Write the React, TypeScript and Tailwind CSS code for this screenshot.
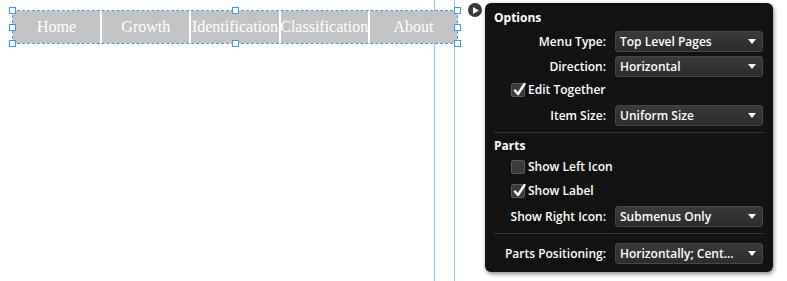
import React from "react";

const items = ["Home", "Growth", "Identification", "Classification", "About"];

function Handle({ className }: { className: string }) {
  return <div className={`absolute w-[7px] h-[7px] bg-white border border-[#3d97f5] ${className}`} />;
}

function Select({ value }: { value: string }) {
  return (
    <div className="h-[21px] w-[148px] flex items-center justify-between pl-[4px] pr-[6px] rounded-[3px] border border-[#474747] bg-gradient-to-b from-[#3a3a3a] to-[#2c2c2c] text-white text-[12px] font-semibold">
      <span>{value}</span>
      <svg width="8" height="5" viewBox="0 0 8 5">
        <path d="M0 0 H8 L4 5 Z" fill="#fff" />
      </svg>
    </div>
  );
}

function Row({ label, value }: { label: string; value: string }) {
  return (
    <div className="flex items-center gap-[8px]">
      <div className="w-[113px] text-right pr-[1px] text-[12px] font-semibold text-white">{label}</div>
      <Select value={value} />
    </div>
  );
}

function Check({ label, checked }: { label: string; checked: boolean }) {
  return (
    <div className="flex items-center gap-[3px] h-[14px] pl-[17px]">
      <div className="relative w-[14px] h-[14px] rounded-[2px] border border-[#5a5a5a] bg-[#3a3a3a]">
        {checked && (
          <svg className="absolute left-[1px] top-[-2px]" width="13" height="15" viewBox="0 0 13 15">
            <path d="M2 8.5 L5 12 L11.5 2" stroke="#fff" strokeWidth="2.4" fill="none" strokeLinecap="round" strokeLinejoin="round" />
          </svg>
        )}
      </div>
      <span className="text-[12px] font-semibold text-white">{label}</span>
    </div>
  );
}

export default function App() {
  return (
    <div className="relative flex w-[787px] h-[281px] bg-white overflow-hidden font-['Open_Sans',sans-serif]">
      {/* guides */}
      <div className="absolute left-[434px] top-0 h-full w-px bg-[#8ec3f7]" />
      <div className="absolute left-[454px] top-0 h-full w-px bg-[#8ec3f7]" />

      {/* page canvas with menu bar */}
      <div className="w-[468px] pl-[12px] pt-[10px]">
        <div className="relative w-[446px] h-[34px] border border-dashed border-[#3d97f5]">
          <div className="grid grid-cols-5 gap-[2px] h-full bg-white">
            {items.map((t) => (
              <div
                key={t}
                className="bg-[#c3c3c3] flex items-center justify-center text-white text-[16px] font-['Liberation_Serif',serif]"
              >
                {t}
              </div>
            ))}
          </div>
          <Handle className="left-[-4px] top-[-4px]" />
          <Handle className="left-[-4px] top-[13px]" />
          <Handle className="left-[-4px] bottom-[-4px]" />
          <Handle className="left-[219px] top-[-4px]" />
          <Handle className="left-[219px] bottom-[-4px]" />
          <Handle className="right-[-4px] top-[-4px]" />
          <Handle className="right-[-4px] top-[13px]" />
          <Handle className="right-[-4px] bottom-[-4px]" />
        </div>
      </div>

      {/* collapse button + properties panel */}
      <div className="relative z-10 flex items-start gap-[3px] pt-[3px]">
        <div className="w-[14px] h-[14px] rounded-full bg-[#3a3a3a] flex items-center justify-center">
          <svg width="6" height="7" viewBox="0 0 6 7" className="ml-[1px]">
            <path d="M0 0 L6 3.5 L0 7 Z" fill="#fff" />
          </svg>
        </div>

        <div className="flex flex-col w-[288px] h-[269px] rounded-[6px] bg-[#121212] shadow-[1px_2px_4px_rgba(0,0,0,0.45)] px-[9px] pt-[7px]">
          <div className="h-[16px] leading-[16px] text-[12px] font-bold text-white">Options</div>
          <div className="flex flex-col gap-[4px] mt-[5px]">
            <Row label="Menu Type:" value="Top Level Pages" />
            <Row label="Direction:" value="Horizontal" />
          </div>
          <div className="mt-[6px]">
            <Check label="Edit Together" checked />
          </div>
          <div className="mt-[8px]">
            <Row label="Item Size:" value="Uniform Size" />
          </div>
          <div className="mt-[6px] h-px bg-[#333]" />
          <div className="mt-[5px] h-[16px] leading-[16px] text-[12px] font-bold text-white">Parts</div>
          <div className="flex flex-col gap-[10px] mt-[6px]">
            <Check label="Show Left Icon" checked={false} />
            <Check label="Show Label" checked />
          </div>
          <div className="mt-[8px]">
            <Row label="Show Right Icon:" value="Submenus Only" />
          </div>
          <div className="mt-[6px] h-px bg-[#333]" />
          <div className="mt-[9px]">
            <Row label="Parts Positioning:" value="Horizontally; Cent..." />
          </div>
        </div>
      </div>
    </div>
  );
}
